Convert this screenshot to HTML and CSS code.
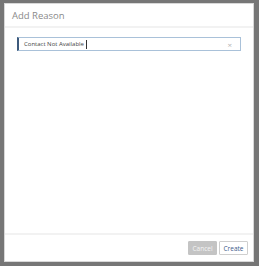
FILE: index.html
```html
<!DOCTYPE html>
<html lang="en">
<head>
    <meta charset="UTF-8">
    <title>Add Reason</title>
    <link rel="stylesheet" href="styles.css">
</head>
<body>
    <div class="overlay">
        <div class="modal">
            <div class="modal-header">Add Reason</div>
            <div class="modal-body">
                <div class="reason-input">
                    <span class="value">Contact Not Available</span><span class="caret"></span>
                    <span class="clear">&times;</span>
                </div>
            </div>
            <div class="modal-footer">
                <button class="btn btn-cancel">Cancel</button>
                <button class="btn btn-create">Create</button>
            </div>
        </div>
    </div>
</body>
</html>
```

FILE: styles.css
```css
html, body {
    margin: 0;
    padding: 0;
    height: 100%;
}
body {
    font-family: "Open Sans", "Liberation Sans", sans-serif;
    background-color: #767676;
}
.overlay {
    height: 100%;
    box-sizing: border-box;
    padding: 3px 5px 4px 4px;
    display: flex;
}
.modal {
    flex: 1;
    display: flex;
    flex-direction: column;
    background: #fff;
    border: 1px solid #d8d8d8;
}
.modal-header {
    height: 22px;
    padding: 0 7px;
    display: flex;
    align-items: center;
    font-size: 9.5px;
    color: #8a8a8a;
    border-bottom: 2px solid #f2f2f2;
}
.modal-body {
    flex: 1;
    padding: 9px 12px;
}
.reason-input {
    height: 10px;
    padding: 1px 8px 1px 5px;
    display: flex;
    align-items: center;
    border: 1px solid #a9c1d9;
    border-left: 2px solid #3d5a7c;
    font-size: 6px;
    color: #444;
}
.caret {
    width: 1px;
    height: 9px;
    margin-left: 2px;
    background: #333;
}
.clear {
    margin-left: auto;
    font-size: 8px;
    color: #b5b5b5;
}
.modal-footer {
    height: 26px;
    padding: 0 5px;
    display: flex;
    align-items: center;
    justify-content: flex-end;
    gap: 2px;
    border-top: 2px solid #f2f2f2;
}
.btn {
    width: 29px;
    height: 14px;
    padding: 0;
    font-family: inherit;
    font-size: 6.5px;
    border-radius: 1px;
}
.btn-cancel {
    background: #c4c4c4;
    color: #f4f4f4;
    border: 1px solid #c4c4c4;
}
.btn-create {
    background: #fff;
    color: #3d5a8a;
    border: 1px solid #cfcfcf;
}
```
